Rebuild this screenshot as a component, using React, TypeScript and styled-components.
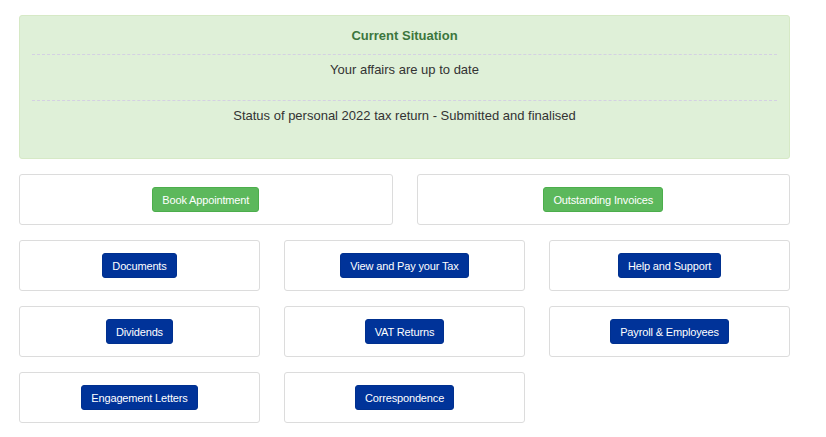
import styled, { createGlobalStyle } from "styled-components";

const GlobalStyle = createGlobalStyle`
    body {
        margin: 0;
        background: #ffffff;
        font-family: "Liberation Sans", Arial, sans-serif;
        color: #333333;
    }
`;

const Page = styled.div`
    width: 771px;
    padding: 15px 0 0 19px;
    display: flex;
    flex-direction: column;
    gap: 15px;
`;

const Situation = styled.div`
    background-color: #dff0d8;
    border: 1px solid #d6e9c6;
    border-radius: 3px;
    padding: 10px 12px 0;
    text-align: center;
`;

const Title = styled.div`
    font-size: 13px;
    font-weight: 700;
    line-height: 20px;
    color: #3c763d;
    margin-bottom: 8px;
`;

const Divider = styled.div`
    border-top: 1px dashed #d4d0e3;
`;

interface LineProps {
    last?: boolean;
}

const Line = styled.div<LineProps>`
    font-size: 13px;
    line-height: 20px;
    color: #333333;
    margin: 5px 0 ${(p) => (p.last ? "32px" : "20px")};
`;

interface GridProps {
    cols: number;
}

const Grid = styled.div<GridProps>`
    display: grid;
    grid-template-columns: repeat(${(p) => p.cols}, minmax(0, 1fr));
    column-gap: 24px;
    row-gap: 15px;
`;

const Tile = styled.div`
    height: 49px;
    border: 1px solid #dcdcdc;
    border-radius: 3px;
    background: #ffffff;
    display: flex;
    align-items: center;
    justify-content: center;
`;

interface ButtonProps {
    green?: boolean;
}

const Button = styled.button<ButtonProps>`
    height: 25px;
    padding: 0 9px;
    font-family: "Liberation Sans", Arial, sans-serif;
    font-size: 11px;
    letter-spacing: -0.15px;
    color: #ffffff;
    border-radius: 3px;
    border: 1px solid ${(p) => (p.green ? "#4cae4c" : "#00308f")};
    background-color: ${(p) => (p.green ? "#5cb85c" : "#003399")};
    cursor: pointer;
    white-space: nowrap;
`;

const TOP = ["Book Appointment", "Outstanding Invoices"];
const LINKS = [
    "Documents",
    "View and Pay your Tax",
    "Help and Support",
    "Dividends",
    "VAT Returns",
    "Payroll & Employees",
    "Engagement Letters",
    "Correspondence",
];

export default function App() {
    return (
        <>
            <GlobalStyle />
            <Page>
                <Situation>
                    <Title>Current Situation</Title>
                    <Divider />
                    <Line>Your affairs are up to date</Line>
                    <Divider />
                    <Line last>Status of personal 2022 tax return - Submitted and finalised</Line>
                </Situation>

                <Grid cols={2}>
                    {TOP.map((t) => (
                        <Tile key={t}>
                            <Button green>{t}</Button>
                        </Tile>
                    ))}
                </Grid>

                <Grid cols={3}>
                    {LINKS.map((t) => (
                        <Tile key={t}>
                            <Button>{t}</Button>
                        </Tile>
                    ))}
                </Grid>
            </Page>
        </>
    );
}
